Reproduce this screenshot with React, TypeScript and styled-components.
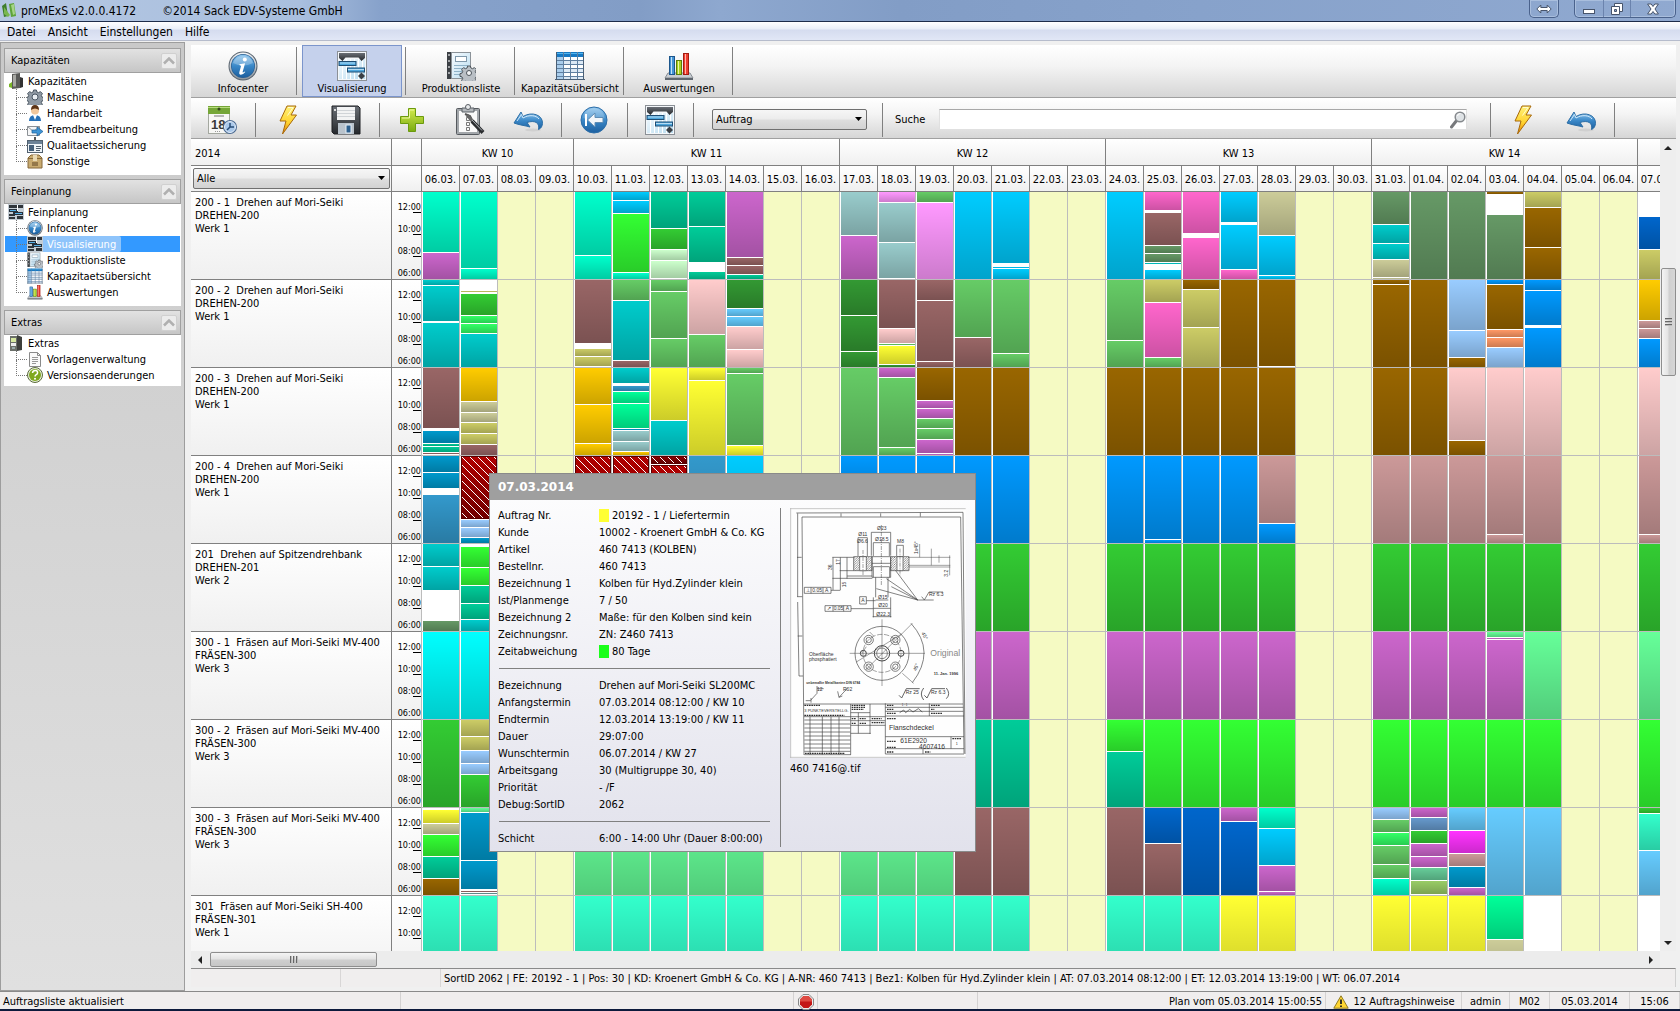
import React from 'react';
import styled, { createGlobalStyle, css } from 'styled-components';

const Global = createGlobalStyle`
  * { box-sizing: border-box; }
  body {
    margin: 0;
    overflow: hidden;
    background: #f0f0f0;
    color: #000;
    font-family: 'DejaVu Sans Condensed', 'DejaVu Sans', Tahoma, sans-serif;
    font-size: 11px;
    line-height: 16px;
  }
  button, select, input { font: inherit; color: inherit; }
  ul, dl, dd, p, h1, h2 { margin: 0; padding: 0; font-size: inherit; font-weight: inherit; }
  ul { list-style: none; }
`;

/* ---------- icons ---------- */

type IconProps = { size?: number };

const Svg = styled.svg`
  display: block;
  flex: none;
`;

const Defs = () => (
  <svg width="0" height="0" aria-hidden="true">
    <defs>
      <linearGradient id="gBlue" x1="0" y1="0" x2="0" y2="1">
        <stop offset="0" stopColor="#8fc6ee" />
        <stop offset="0.5" stopColor="#3a88c8" />
        <stop offset="1" stopColor="#1c5f9f" />
      </linearGradient>
      <linearGradient id="gSilver" x1="0" y1="0" x2="0" y2="1">
        <stop offset="0" stopColor="#f4f6f8" />
        <stop offset="1" stopColor="#8c949c" />
      </linearGradient>
      <linearGradient id="gBolt" x1="0" y1="0" x2="0" y2="1">
        <stop offset="0" stopColor="#fff27a" />
        <stop offset="0.6" stopColor="#ffd22e" />
        <stop offset="1" stopColor="#e07a00" />
      </linearGradient>
      <linearGradient id="gGreen" x1="0" y1="0" x2="0" y2="1">
        <stop offset="0" stopColor="#d3ea4e" />
        <stop offset="1" stopColor="#7aab10" />
      </linearGradient>
      <linearGradient id="gDark" x1="0" y1="0" x2="0" y2="1">
        <stop offset="0" stopColor="#6a6f76" />
        <stop offset="1" stopColor="#25282c" />
      </linearGradient>
      <linearGradient id="gPaper" x1="0" y1="0" x2="1" y2="1">
        <stop offset="0" stopColor="#f6fbff" />
        <stop offset="1" stopColor="#b9dcef" />
      </linearGradient>
    </defs>
  </svg>
);

const gearPath =
  'M-1.4-7h2.8l.5 2 1.7.7 1.8-1.1 2 2-1.1 1.8.7 1.7 2 .5v2.800l-2 .5-.7 1.700 1.100 1.800-2 2-1.800-1.100-1.700.7-.5 2h-2.800l-.5-2-1.700-.7-1.800 1.100-2-2 1.100-1.800-.7-1.700-2-.5v-2.800l2-.5.7-1.700-1.100-1.800 2-2 1.800 1.100 1.700-.7z';

const InfoIcon = ({ size = 30 }: IconProps) => (
  <Svg width={size} height={size} viewBox="0 0 30 30">
    <circle cx="15" cy="15" r="14.500" fill="#59646f" />
    <circle cx="15" cy="15" r="13.500" fill="url(#gSilver)" />
    <circle cx="15" cy="15" r="12" fill="#2a5f92" />
    <circle cx="15" cy="15" r="11.300" fill="url(#gBlue)" />
    <path d="M5 12a10.500 10 0 0 1 20 0q-10 5-20 0z" fill="#fff" opacity=".25" />
    <circle cx="16.800" cy="8.600" r="2" fill="#fff" />
    <path d="M11.500 13.200l5.600-.9-2.500 8.700q-.2 1.200 2.200-.6l.5.700q-2.500 3-4.800 2.700-1.800-.4-1.200-2.600l1.700-6q.1-1-1.700-1.200z" fill="#fff" />
  </Svg>
);

const GanttIcon = ({ size = 30 }: IconProps) => (
  <Svg width={size} height={size} viewBox="0 0 30 30">
    <rect x=".5" y=".5" width="29" height="29" fill="#f4f7fa" stroke="#8b9096" />
    <rect x="2" y="8" width="26" height="20" fill="url(#gPaper)" />
    <path d="M5.500 8v20M9.500 8v20M13.500 8v20M17.500 8v20M21.500 8v20M25.500 8v20" stroke="#fff" />
    <path d="M2 2h26v5l-3.500 3-3-3.500h-13l-3 3.500-3.500-3z" fill="url(#gDark)" />
    <rect x="2" y="10.500" width="17" height="4" fill="#4fa8de" stroke="#1f4d73" />
    <rect x="10.500" y="17" width="17" height="4" fill="#4fa8de" stroke="#1f4d73" />
    <path d="M3 12h15M11 18.500h16" stroke="#b5dcf4" />
    <path d="M24.500 21.500l3.500 3.500-3.500 3.500-3.500-3.500z" fill="#3a3f45" />
  </Svg>
);

const GanttSmallIcon = () => (
  <Svg width={16} height={16} viewBox="0 0 16 16">
    <rect width="16" height="16" fill="#c3ccd4" />
    <path d="M1 1h14v3h-14zM1 10h6v2h-6zM9 12h6v3h-6zM1 13h6v2h-6z" fill="#30353a" />
    <path d="M1 5h9v3h-9zM5 8h10v3h-10z" fill="#26313c" />
    <path d="M2 6.500h6M7 9.500h7" stroke="#58b0e6" />
    <path d="M9.500 1v6" stroke="#fff" />
  </Svg>
);

const ProductionIcon = ({ size = 30 }: IconProps) => (
  <Svg width={size} height={size} viewBox="0 0 30 30">
    <rect x="1" y="1" width="24" height="27" fill="#8b9298" />
    <rect x="1" y="1" width="4" height="27" fill="#3c4045" />
    <path d="M3 3v24" stroke="#c6c9cc" strokeDasharray="2 4" strokeWidth="1.500" />
    <rect x="6" y="2" width="18" height="25" fill="url(#gPaper)" />
    <rect x="9.500" y="5.500" width="11" height="5" fill="#fff" stroke="#7f98ab" />
    <path d="M8 14.500h14M8 17.500h11M8 20.500h8M8 23.500h7" stroke="#8fb2c8" />
    <g transform="translate(23 22)">
      <path d={gearPath} fill="#b9bfc5" stroke="#4d545b" />
      <circle r="2.500" fill="#f3f5f7" stroke="#4d545b" />
    </g>
  </Svg>
);

const TableIcon = ({ size = 30 }: IconProps) => (
  <Svg width={size} height={size} viewBox="0 0 30 30">
    <rect x="1" y="1" width="28" height="28" fill="#fff" />
    <rect x="1" y="5" width="7" height="24" fill="#a9cdec" />
    <path d="M8 9h21v4h-21zM8 17h21v4h-21zM8 25h21v3h-21z" fill="#dce9f5" />
    <rect x="1" y="1" width="28" height="5" fill="#1679c4" />
    <path d="M1 2.500h28" stroke="#53b5ee" />
    <path d="M1 9.500h28M1 13.500h28M1 17.500h28M1 21.500h28M1 25.500h28M8.500 1v28M15.500 1v28M22.500 1v28" stroke="#5f7fa0" />
    <path d="M1.500 1v28M28.500 1v28M0 28.500h30" stroke="#4a5f75" />
  </Svg>
);

const ChartIcon = ({ size = 30 }: IconProps) => (
  <Svg width={size} height={size} viewBox="0 0 30 30">
    <path d="M4 22h22l3 5h-28z" fill="#c9cdd2" stroke="#868c93" />
    <path d="M1 27h28v2h-28z" fill="#5f666e" />
    <rect x="5.500" y="5.500" width="5" height="18" fill="#4495d6" stroke="#1d568c" />
    <path d="M7.500 6v17" stroke="#c3e2f8" />
    <rect x="12.500" y="9.500" width="5" height="14" fill="#a9d01e" stroke="#5c7d0c" />
    <path d="M14.500 10v13" stroke="#e9f7a4" />
    <rect x="19.500" y="2.500" width="5" height="21" fill="#ef3e30" stroke="#a31b12" />
    <path d="M21.500 3v20" stroke="#ffb3a8" />
  </Svg>
);

const CalendarIcon = () => (
  <Svg width={30} height={30} viewBox="0 0 30 30">
    <rect x="1.500" y="1.500" width="21" height="27" fill="#f7f7f5" stroke="#a4a8a0" />
    <rect x="1" y="1" width="22" height="8" fill="#75a637" />
    <path d="M1 2.500h22" stroke="#b9dc80" />
    <circle cx="12" cy="4" r="1.500" fill="#34471c" />
    <path d="M7 11h10" stroke="#777" />
    <text x="4" y="24" fontSize="13" fontWeight="bold" fill="#3a3a3a" fontFamily="Liberation Sans, sans-serif">18</text>
    <path d="M8 26.500h6" stroke="#999" strokeDasharray="1 1" />
    <circle cx="23" cy="22" r="7" fill="#4b6b93" />
    <circle cx="23" cy="22" r="5.500" fill="#a9c8ea" stroke="#e4eefa" />
    <path d="M23 18v4h4M23 22l-3 3" stroke="#274c77" strokeWidth="1.500" fill="none" />
  </Svg>
);

const BoltIcon = () => (
  <Svg width={20} height={30} viewBox="0 0 20 30">
    <path d="M9 1h9l-5 9h5.500l-14 19 3.500-13h-6z" fill="url(#gBolt)" stroke="#a8690a" strokeLinejoin="round" />
    <path d="M10 2.500h5l-5.500 8" stroke="#fffbd0" fill="none" />
  </Svg>
);

const FloppyIcon = () => (
  <Svg width={30} height={30} viewBox="0 0 30 30">
    <path d="M1 1h26l2 2v26h-26l-2-2z" fill="url(#gDark)" stroke="#1d1f22" />
    <rect x="6" y="2" width="18" height="13" fill="#f2f3f4" />
    <path d="M6 5.500h18M6 8.500h18M6 11.500h18" stroke="#d0d4d8" />
    <rect x="7" y="18" width="16" height="11" fill="#b9c3cc" />
    <rect x="15" y="20" width="5" height="8" fill="#2c5f8d" stroke="#e8f0f6" />
    <rect x="3" y="4" width="2" height="2" fill="#ddd" />
  </Svg>
);

const PlusIcon = () => (
  <Svg width={26} height={26} viewBox="0 0 26 26">
    <path d="M9.500 1.500h7v8h8v7h-8v8h-7v-8h-8v-7h8z" fill="url(#gGreen)" stroke="#6b9a0e" />
    <path d="M11 3h4M3 11h7.500v-8" stroke="#edf8a6" fill="none" />
  </Svg>
);

const ClipboardIcon = () => (
  <Svg width={30} height={32} viewBox="0 0 30 32">
    <rect x="1.500" y="4.500" width="23" height="26" rx="1" fill="#a2a6aa" stroke="#55595e" />
    <rect x="4" y="7" width="18" height="21" fill="#fafafa" />
    <path d="M7 4h12v4h-12z" fill="#b4b8bc" stroke="#5b6066" />
    <circle cx="13" cy="3" r="2.500" fill="#e8eaec" stroke="#5a5f65" />
    <path d="M11.500 13.500h3v3h-3zM11.500 18.500h3v3h-3zM11.500 23.500h3v3h-3z" fill="none" stroke="#777" />
    <path d="M10 10l5 2 2 4" stroke="#555" strokeWidth="2" fill="none" />
    <path d="M12 11l6 7" stroke="#666" strokeWidth="3" />
    <path d="M17 17l11 11.500" stroke="#2b2d30" strokeWidth="4" />
    <path d="M17 16l10 10.500" stroke="#aeb3b8" />
  </Svg>
);

const UndoIcon = () => (
  <Svg width={30} height={24} viewBox="0 0 30 24">
    <ellipse cx="20" cy="22" rx="8" ry="1.500" fill="#d0d0d0" />
    <path d="M1 15l7-11 2 4.500c9-5.500 20-1.500 19.500 7-.3 3-1.500 5-4 6 1.500-7-4-9.500-11.500-7l3 4.500c-5-1.500-11-2-16-4z" fill="url(#gBlue)" stroke="#2c6ea6" strokeLinejoin="round" />
    <path d="M4 13l4.500-6.500 1.500 3.500c6-3.500 13-3 16 1" stroke="#cfe8fa" fill="none" />
  </Svg>
);

const BackIcon = () => (
  <Svg width={28} height={28} viewBox="0 0 28 28">
    <circle cx="14" cy="14" r="13" fill="url(#gBlue)" stroke="#2b6da8" />
    <path d="M3.500 12a10.500 10 0 0 1 21 0q-10.500 5-21 0z" fill="#fff" opacity=".2" />
    <path d="M6 8v12" stroke="#fff" strokeWidth="2" />
    <path d="M7.500 14l7.500-7v4.500h8v5h-8v4.500z" fill="#f2f6fa" stroke="#5e8db5" />
  </Svg>
);

const SearchIcon = () => (
  <Svg width={16} height={18} viewBox="0 0 16 18">
    <path d="M7 9l-5.500 7" stroke="#77797c" strokeWidth="3" strokeLinecap="round" />
    <circle cx="10" cy="6" r="4.800" fill="#dfe3e6" stroke="#85898d" strokeWidth="1.500" />
    <path d="M7.500 5a3 3 0 0 1 3-2.500" stroke="#fff" fill="none" />
  </Svg>
);

const TowerIcon = () => (
  <Svg width={16} height={16} viewBox="0 0 16 16">
    <path d="M4 1l8-1v15l-8 1z" fill="#5a5a58" />
    <path d="M5 2l3-.5v12h-3z" fill="#a9a9a4" />
    <path d="M12 4l3 1v9l-3 1z" fill="#333" />
    <path d="M1 11l3-2v6l-3-1z" fill="#7ab526" />
  </Svg>
);

const ExtrasIcon = () => (
  <Svg width={16} height={16} viewBox="0 0 16 16">
    <rect x="2" y="1" width="7" height="15" fill="#6b6f69" />
    <path d="M9 0l5 2v13l-5 1z" fill="#3d3f3c" />
    <rect x="3" y="3" width="5" height="4" fill="#d6e8a0" />
    <rect x="3" y="8" width="5" height="3" fill="#eee" />
    <rect x="4" y="12" width="3" height="2" fill="#9aa" />
  </Svg>
);

const GearIcon = () => (
  <Svg width={16} height={16} viewBox="-8 -8 16 16">
    <path d={gearPath} fill="#8f99a3" stroke="#4a5662" />
    <circle r="3" fill="#e9eef2" stroke="#4a5662" />
  </Svg>
);

const PersonIcon = () => (
  <Svg width={16} height={16} viewBox="0 0 16 16">
    <path d="M2 16q0-6 6-6t6 6z" fill="#2671b8" />
    <path d="M6 10l2 5 2-5z" fill="#fff" />
    <circle cx="8" cy="5.500" r="4" fill="#f0c79c" />
    <path d="M4 5q0-5 4-5t4 5q-4-3-8 0z" fill="#5d3415" />
  </Svg>
);

const MailIcon = () => (
  <Svg width={16} height={16} viewBox="0 0 16 16">
    <path d="M.5 5.500h12v9h-12z" fill="#f5f6f7" stroke="#8c9196" />
    <path d="M.5 5.500l6 5 6-5" fill="none" stroke="#8c9196" />
    <path d="M5 9h5v-3l6 4.500-6 4.500v-3h-5z" fill="#3f95d6" stroke="#1d5f99" strokeWidth=".7" />
  </Svg>
);

const BadgeIcon = () => (
  <Svg width={16} height={16} viewBox="0 0 16 16">
    <path d="M8 0v4" stroke="#555" strokeWidth="2" />
    <rect x=".5" y="3.500" width="15" height="12" fill="#eef3f7" stroke="#51606e" />
    <path d="M1 4h14v3h-14z" fill="#6c8297" />
    <rect x="2" y="8" width="5" height="6" fill="#46617c" />
    <path d="M9 9.500h5M9 11.500h5M9 13.500h4" stroke="#51606e" />
  </Svg>
);

const BoxIcon = () => (
  <Svg width={16} height={16} viewBox="0 0 16 16">
    <path d="M1 5l3-3h8l3 3v10h-14z" fill="#c9ab70" stroke="#86693a" />
    <path d="M1 5.500h14" stroke="#86693a" />
    <path d="M6 2h4v6h-4z" fill="#e8d9b4" />
    <rect x="5" y="9" width="6" height="4" fill="#94784a" />
  </Svg>
);

const PageIcon = () => (
  <Svg width={16} height={16} viewBox="0 0 16 16">
    <path d="M2.500 1.500h8l3 3v11h-11z" fill="#fafafa" stroke="#8a8a8a" />
    <path d="M10.500 1.500v3h3" fill="none" stroke="#8a8a8a" />
    <path d="M5 6.500h6M5 8.500h6M5 10.500h6M5 12.500h4" stroke="#999" />
  </Svg>
);

const HelpIcon = () => (
  <Svg width={16} height={16} viewBox="0 0 16 16">
    <circle cx="8" cy="8" r="7.500" fill="#e8eedd" stroke="#5a6b3a" />
    <circle cx="8" cy="8" r="6" fill="#7fa81e" />
    <path d="M5.500 6q.3-2.500 2.700-2.500t2.400 2.200q0 1.300-1.300 2t-1.200 1.800" stroke="#fff" strokeWidth="1.500" fill="none" />
    <circle cx="8" cy="11.800" r="1" fill="#fff" />
  </Svg>
);

const LogoIcon = () => (
  <Svg width={16} height={16} viewBox="0 0 16 16">
    <path d="M1 4l4-3 2 13-4 1z" fill="#3f7d2d" />
    <path d="M3 5l6 8-2 2-4-3z" fill="#78b750" />
    <path d="M8 2l5-1 2 13-5 1z" fill="#5ea43a" />
    <path d="M10 3l3-1 1 10-2 1z" fill="#a5d487" />
  </Svg>
);

const WarnIcon = () => (
  <Svg width={16} height={14} viewBox="0 0 16 14">
    <path d="M8 .8l7.200 12.400h-14.400z" fill="#ffd633" stroke="#8f7a20" strokeLinejoin="round" />
    <path d="M8 4.500v4.500M8 10.500v1.500" stroke="#222" strokeWidth="1.800" />
  </Svg>
);

const RecordIcon = () => (
  <Svg width={16} height={16} viewBox="0 0 16 16">
    <path d="M5 .5h6l4.500 4.500v6l-4.500 4.500h-6l-4.500-4.500v-6z" fill="#eee" stroke="#888" />
    <path d="M5.500 2h5l3.500 3.500v5l-3.500 3.500h-5l-3.500-3.500v-5z" fill="#c41616" />
    <path d="M5.500 2h5l3.500 3.500v2h-12v-2z" fill="#de4a42" />
  </Svg>
);

const Arrow = ({ dir }: { dir: 'up' | 'down' | 'left' | 'right' }) => {
  const d = { up: 'M0 5l4-4 4 4z', down: 'M0 2l4 4 4-4z', left: 'M6 0l-4 4 4 4z', right: 'M2 0l4 4-4 4z' }[dir];
  return (
    <Svg width={8} height={8} viewBox="0 0 8 8">
      <path d={d} fill="#222" />
    </Svg>
  );
};

/* ---------- window frame ---------- */

const Window = styled.div`
  display: flex;
  flex-direction: column;
  height: 100vh;
  border-bottom: 2px solid #0d1a3c;
`;

const TitleBar = styled.header`
  display: flex;
  align-items: flex-start;
  height: 22px;
  flex: none;
  padding-left: 1px;
  border-bottom: 1px solid #1d2c4a;
  background: linear-gradient(90deg, #b4c7e2 0, #a9bfde 300px, #87a2cb 380px, #829dc6 640px, #8ea8cf 720px, #829dc6 900px, #87a2cb 1200px, #90a9d0 100%);
  font-size: 12px;
`;

const TitleText = styled.h1`
  display: flex;
  flex: 1;
  gap: 26px;
  padding: 3px 0 0 4px;
  white-space: nowrap;
`;

const TitleIcon = styled.span`
  padding-top: 2px;
`;

const CaptionGroup = styled.div`
  display: flex;
  margin: 0 4px 0 11px;
  height: 18px;
  border: 1px solid #4a628c;
  border-top: 0;
  border-radius: 0 0 5px 5px;
  box-shadow: inset 0 0 0 1px #a9bedd;
  overflow: hidden;
`;

const CaptionButton = styled.button<{ $w: number }>`
  display: flex;
  align-items: center;
  justify-content: center;
  width: ${(p) => p.$w}px;
  padding: 0;
  border: 0;
  background: transparent;
  & + & { border-left: 1px solid #6b83ad; }
`;

const MenuBar = styled.nav`
  display: flex;
  flex: none;
  height: 19px;
  gap: 12px;
  padding-left: 7px;
  border-bottom: 1px solid #b6bccc;
  background: linear-gradient(#fff 0, #e9eef8 7px, #d5dcef 8px, #e1e7f6 100%);
`;

const MenuItem = styled.button`
  padding: 2px 0 0;
  border: 0;
  background: transparent;
  font-size: 12px;
  line-height: 16px;
`;

const Body = styled.div`
  display: flex;
  flex: 1;
  min-height: 0;
`;

/* ---------- sidebar ---------- */

const Sidebar = styled.aside`
  display: flex;
  flex-direction: column;
  gap: 4px;
  width: 185px;
  flex: none;
  margin-top: 1px;
  padding: 5px 3px;
  border: 1px solid #9d9d9d;
  background: linear-gradient(#c9c9c9, #e0e0e0);
`;

const PanelHead = styled.h2`
  display: flex;
  align-items: center;
  justify-content: space-between;
  height: 25px;
  padding: 1px 3px 0 6px;
  border: 1px solid #a0a0a0;
  background: linear-gradient(#e2e2e2, #c6c6c6);
`;

const Collapse = styled.button`
  display: flex;
  align-items: center;
  justify-content: center;
  width: 16px;
  height: 16px;
  padding: 0;
  border: 1px solid #d0d0d0;
  border-radius: 2px;
  background: #ececec;
`;

const Tree = styled.ul`
  padding: 0 1px 6px;
  background: #fff;
  section:last-child > & { padding-bottom: 3px; }
`;

const TreeRow = styled.li<{ $active?: boolean }>`
  display: flex;
  height: 16px;
  background: ${(p) => (p.$active ? '#3399ff' : 'transparent')};
  color: ${(p) => (p.$active ? '#fff' : '#000')};
`;

const TreeLink = styled.button<{ $active?: boolean }>`
  display: flex;
  gap: 4px;
  padding: 0 5px 0 0;
  border: 0;
  border-radius: 2px;
  background: ${(p) => (p.$active ? '#8ec4fb' : 'transparent')};
  line-height: 15px;
`;

const TreeText = styled.span`
  padding-top: 1px;
`;

const RootLink = styled(TreeLink)`
  margin-left: 3px;
`;

const Guide = styled.span<{ $last: boolean }>`
  width: 11px;
  margin-left: 11px;
  &::before {
    content: '';
    display: block;
    height: 8px;
    border-left: 1px dotted #777;
    border-bottom: 1px dotted #777;
  }
  &::after {
    content: '';
    display: block;
    height: 8px;
    border-left: ${(p) => (p.$last ? '0' : '1px dotted #777')};
  }
`;

type Leaf = { label: string; icon: React.ReactNode; active?: boolean };

const SidePanel = ({ title, icon, items }: { title: string; icon: React.ReactNode; items: Leaf[] }) => (
  <section>
    <PanelHead>
      {title}
      <Collapse aria-label={`${title} einklappen`}>
        <Svg width={12} height={8} viewBox="0 0 12 8">
          <path d="M1 6.500l5-5 5 5" fill="none" stroke="#b0b0b0" strokeWidth="2.500" />
        </Svg>
      </Collapse>
    </PanelHead>
    <Tree>
      <TreeRow>
        <RootLink>{icon}<TreeText>{title}</TreeText></RootLink>
      </TreeRow>
      {items.map((it, i) => (
        <TreeRow key={it.label} $active={it.active}>
          <Guide $last={i === items.length - 1} />
          <TreeLink $active={it.active}>{it.icon}<TreeText>{it.label}</TreeText></TreeLink>
        </TreeRow>
      ))}
    </Tree>
  </section>
);

/* ---------- toolbars ---------- */

const Main = styled.main`
  display: flex;
  flex-direction: column;
  flex: 1;
  min-width: 0;
  padding: 4px 4px 4px 6px;
`;

const TabBar = styled.div`
  display: flex;
  flex: none;
  height: 53px;
  padding-left: 2px;
  border-bottom: 1px solid #a0a0a0;
  background: linear-gradient(#fff, #f4f4f4 40%, #d6d6d6);
`;

const Tab = styled.button<{ $active?: boolean }>`
  display: flex;
  flex-direction: column;
  align-items: center;
  width: 100px;
  padding: 5px 0 0;
  border: 1px solid transparent;
  background: transparent;
  line-height: 16px;
  white-space: nowrap;
  ${(p) => p.$active && css`
    border-color: #7b95cc;
    background: #c5d1ec;
  `}
`;

const TabSep = styled.span`
  width: 1px;
  margin: 2px 5px 2px 3px;
  background: #808080;
`;

const ToolBar = styled.div`
  display: flex;
  align-items: center;
  flex: none;
  height: 41px;
  padding-top: 3px;
  border-bottom: 1px solid #a0a0a0;
  background: linear-gradient(#fff, #f4f4f4 40%, #d6d6d6);
`;

const ToolButton = styled.button`
  display: flex;
  align-items: center;
  justify-content: center;
  width: 58px;
  height: 36px;
  flex: none;
  padding: 0;
  border: 0;
  background: transparent;
`;

const ToolSep = styled.span`
  width: 1px;
  height: 34px;
  flex: none;
  margin: 0 3px 0 4px;
  background: #808080;
`;

const SelectBox = styled.span<{ $w: number }>`
  position: relative;
  display: block;
  width: ${(p) => p.$w}px;
  height: 21px;
  flex: none;
  svg {
    position: absolute;
    right: 5px;
    top: 8px;
    pointer-events: none;
  }
`;

const Select = styled.select`
  display: block;
  appearance: none;
  width: 100%;
  height: 100%;
  padding: 0 3px;
  border: 1px solid #707070;
  border-radius: 2px;
  background: linear-gradient(#f6f6f6, #ececec 48%, #dedede 52%, #d2d2d2);
`;

const Picker = ({ width, label, value }: { width: number; label: string; value: string }) => (
  <SelectBox $w={width}>
    <Select aria-label={label} defaultValue={value}>
      <option>{value}</option>
    </Select>
    <Svg width={7} height={4} viewBox="0 0 7 4">
      <path d="M0 0h7l-3.500 4z" fill="#000" />
    </Svg>
  </SelectBox>
);

const FilterSlot = styled.div`
  padding: 0 11px 0 15px;
`;

const SearchLabel = styled.label`
  padding: 0 14px 0 9px;
`;

const SearchField = styled.div`
  display: flex;
  align-items: center;
  flex: 1;
  height: 21px;
  margin-right: 19px;
  border: 1px solid #e0e0e0;
  border-top-color: #a8a8a8;
  background: #fff;
`;

const SearchInput = styled.input`
  flex: 1;
  min-width: 0;
  height: 18px;
  border: 0;
  outline: 0;
  background: transparent;
`;

const EndSpace = styled.span`
  width: 58px;
`;

/* ---------- planning chart ---------- */

const ChartFrame = styled.div`
  display: flex;
  flex: 1;
  min-height: 0;
`;

const Chart = styled.div`
  flex: 1;
  min-width: 0;
  overflow: hidden;
  background: #fff;
`;

const HeadRow = styled.div<{ $h: number }>`
  display: flex;
  height: ${(p) => p.$h}px;
  border-bottom: 1px solid #808080;
  background: linear-gradient(#fff, #f0f0f0);
`;

const HeadLabel = styled.div`
  display: flex;
  align-items: center;
  width: 201px;
  flex: none;
  padding: 3px 0 0 4px;
  border-right: 1px solid #808080;
`;

const HeadFilter = styled(HeadLabel)`
  padding: 0 0 0 2px;
`;

const HeadTime = styled.div`
  width: 29px;
  flex: none;
`;

const Week = styled.div<{ $days: number }>`
  display: flex;
  align-items: center;
  justify-content: center;
  width: ${(p) => p.$days * 38}px;
  flex: none;
  padding-top: 3px;
  border-left: 1px solid #808080;
`;

const DayHead = styled.div`
  width: 38px;
  flex: none;
  padding-top: 6px;
  border-left: 1px solid #808080;
  text-align: center;
  white-space: nowrap;
`;

const Row = styled.div`
  display: flex;
  height: 88px;
`;

const RowLabel = styled.div`
  width: 201px;
  flex: none;
  padding: 4px 0 0 4px;
  border-right: 1px solid #808080;
  border-bottom: 1px solid #808080;
  background: linear-gradient(#fff, #f0f0f0);
  line-height: 13px;
  white-space: pre;
`;

const Times = styled.div`
  width: 29px;
  flex: none;
  padding-top: 10px;
  border-bottom: 1px solid #808080;
  background: linear-gradient(#fff, #f0f0f0);
`;

const Time = styled.div`
  height: 22px;
  font-size: 9px;
  line-height: 10px;
  text-align: right;
`;

const Tick = styled.span`
  display: block;
  width: 8px;
  height: 1px;
  margin-left: auto;
  background: #000;
`;

const Cell = styled.div<{ $free?: boolean }>`
  display: flex;
  flex-direction: column;
  gap: 1px;
  width: 38px;
  flex: none;
  padding-left: ${(p) => (p.$free ? 0 : 1)}px;
  border-left: 1px solid #bcbcbc;
  border-bottom: 1px solid #bcbcbc;
  background: ${(p) => (p.$free ? '#f5fac3' : '#fff')};
  overflow: hidden;
`;

const Job = styled.div<{ $kind: string }>`
  flex: none;
  ${(p) => {
    if (p.$kind === 'fff') return css`background: #fff;`;
    if (p.$kind === 'hat' || p.$kind === 'hdk') {
      return css`
        border: 1px solid #5a0000;
        background:
          linear-gradient(45deg, transparent 47%, #fff 47%, #fff 53%, transparent 53%) 0 0 / 8px 8px,
          linear-gradient(${p.$kind === 'hat' ? '#b00000, #700000' : '#8a0000, #600000'});
      `;
    }
    return css`background: linear-gradient(transparent, rgba(0, 0, 0, 0.2)) #${p.$kind};`;
  }}
`;

const CELL_HEIGHT = 87;

/* A cell lists its jobs from top to bottom as colour:end, the last one reaching the cell's foot. */
const DayCell = ({ jobs }: { jobs: string }) => {
  let top = 0;
  return (
    <Cell>
      {jobs.split(' ').filter(Boolean).map((job, i) => {
        const [kind, end] = job.split(':');
        const bottom = end ? Number(end) : CELL_HEIGHT;
        const height = Math.max(bottom - top, 0);
        top = bottom + 1;
        return <Job key={i} $kind={kind} style={{ height }} />;
      })}
    </Cell>
  );
};

const WEEKS = [
  { name: 'KW 10', days: ['06.03.', '07.03.', '08.03.', '09.03.'], work: 2 },
  { name: 'KW 11', days: ['10.03.', '11.03.', '12.03.', '13.03.', '14.03.', '15.03.', '16.03.'], work: 5 },
  { name: 'KW 12', days: ['17.03.', '18.03.', '19.03.', '20.03.', '21.03.', '22.03.', '23.03.'], work: 5 },
  { name: 'KW 13', days: ['24.03.', '25.03.', '26.03.', '27.03.', '28.03.', '29.03.', '30.03.'], work: 5 },
  { name: 'KW 14', days: ['31.03.', '01.04.', '02.04.', '03.04.', '04.04.', '05.04.', '06.04.'], work: 5 },
  { name: '', days: ['07.04.'], work: 1 },
];

const same = (job: string, n = 5) => Array<string>(n).fill(job);

type Machine = { lines: string[]; times?: string[]; weeks: string[][] };

const MACHINES: Machine[] = [
  {
    lines: ['200 - 1  Drehen auf Mori-Seiki', 'DREHEN-200', 'Werk 1'],
    weeks: [
      ['0fc:60 c6c', '0fc:76 0fc'],
      ['0fc:63 0fc', '0cf:8 0cf:21 3f3:80 0fc', '0c9:36 3c3:57 cfc:68 cfc:86', '0c9:34 0c9:70 fff:79 0c9', 'c6c:65 966:73 966:82 0c9'],
      ['9cc:43 c6c', 'f9f:10 9cc:50 9cc:86', '6c6:10 f9f', '0cf', '0cf:71 fff:74 0cf:76 0cf'],
      ['0cf', 'f6c:18 fff:20 966:53 696:61 696:70 0cc:72 fff:77 0cf', 'f6c:41 fff:45 f6c', '0cf:30 fff:32 0cf:77 f6c', 'cc9:43 0cf:83 0cf'],
      ['696:32 0cc:51 0cc:67 cc9:85 cc9', '696', '696', '960:2 fff:22 696', 'cc6:15 960:55 960'],
      ['fff:24 06c:57 cc6'],
    ],
  },
  {
    lines: ['200 - 2  Drehen auf Mori-Seiki', 'DREHEN-200', 'Werk 1'],
    weeks: [
      ['0cc:5 0cc:41 fff:42 0cc', 'fff:10 cc6:12 fff:13 3c3:35 3f6:43 3f6:53 0cc'],
      ['966:63 fff:68 cc6:76 cc6:86', '6c6:20 0cc:80 966', '6c6:11 6c6:58 6c6', 'fcc:54 6c6', '393:28 6cf:36 6cf:46 fcc:69 fcc'],
      ['393:35 393:71 393', '966:48 fcc:63 6c6:65 ff3:84 393', '966:20 966:81 966', '6c6:57 966', '6c6:73 6c6'],
      ['6c6:60 6c6', 'cc6:22 f6c:77 6c6', '960:9 cc6:47 cc6', '960', '960:86'],
      ['960:4 960', '960', '9cf:50 9cf:77 960', '09f:4 960:49 f96:57 f96:67 9cf', '09f:10 09f:45 fff:47 09f'],
      ['fc0:40 c99:48 c99:58 09f'],
    ],
  },
  {
    lines: ['200 - 3  Drehen auf Mori-Seiki', 'DREHEN-200', 'Werk 1'],
    weeks: [
      ['966:60 fff:62 09c:75 0c9:78 0c9:84 966:86', 'fc0:33 cc9:44 cc9:54 cc6:65 cc6:76 966'],
      ['fc0:36 fc0:75 fc0', '0cc:15 fff:17 39c:23 0f9:35 0f9:60 09c:62 9cc:73 9cc:83 fc0', 'ff3:52 0cc', 'ff3:12 ff3', '6c6:5 6c6:77 ff3'],
      ['6c6', 'c6c:9 6c6:79 6c6', '960:32 c6c:40 c6c:50 6c6:60 6c6:71 c6c:85 c6c', '960', '960'],
      same('960'),
      ['960', '960', 'fcc:72 960', 'fcc', 'fcc'],
      ['fcc'],
    ],
  },
  {
    lines: ['200 - 4  Drehen auf Mori-Seiki', 'DREHEN-200', 'Werk 1'],
    weeks: [
      ['09c:16 09c:32 fff:38 39c', 'hat:63 9cf:71 9cf:81 09c'],
      ['hat', 'hat', 'hdk:8 hat', '39c', '0cf'],
      ['09f:40 09f', '09f', '09f', '09f', '09f'],
      ['09f', '09f:83 09f', '09f', '09f', 'c99:67 09f'],
      ['c99', 'c99', 'c99', 'c99:78 c99', 'c99'],
      ['c99:78 c99'],
    ],
  },
  {
    lines: ['201  Drehen auf Spitzendrehbank', 'DREHEN-201', 'Werk 2'],
    weeks: [
      ['0cc:22 0cc:46 fff:76 696', 'fff:2 3f3:23 3f3:41 0c9:59 0c9:75 0cc'],
      same('3c3'), same('3c3'), same('3c3'), same('3c3'), ['3c3'],
    ],
  },
  {
    lines: ['300 - 1  Fräsen auf Mori-Seiki MV-400', 'FRÄSEN-300', 'Werk 3'],
    weeks: [
      ['0ff', '0ff'],
      same('c6c'), same('c6c'), same('c6c'),
      ['c6c', 'c6c', 'c6c', '6f9:5 c6c:7 c6c', '6f9'],
      ['6f9'],
    ],
  },
  {
    lines: ['300 - 2  Fräsen auf Mori-Seiki MV-400', 'FRÄSEN-300', 'Werk 3'],
    weeks: [
      ['3c3', 'cc6:16 cc6:30 9cf:43 9cf:54 3c3'],
      same('0c9'), same('0c9'),
      ['3f3:31 0c9', '3f3', '3f3', '3f3', '3f3'],
      same('3f3'), ['3f3'],
    ],
  },
  {
    lines: ['300 - 3  Fräsen auf Mori-Seiki MV-400', 'FRÄSEN-300', 'Werk 3'],
    weeks: [
      ['fff:1 ff3:15 cc9:26 3f3:48 0c9:70 960', '6f9:4 09c:52 09c:81 fff:82 966:84 699:86'],
      same('6f9'),
      ['6f9', '6f9', '6f9', '966', '966'],
      ['966', '06c:35 966', '06c', 'c6c:13 06c', '0fc:20 0cf:57 c6c:83 c6c'],
      [
        '9cf:11 6c6:24 3f6:37 6c6:56 6c6:70 0fc',
        'c6c:9 69c:22 3c3:35 c6c:48 c6c:59 6c9:72 9c6:86',
        '6cf:22 f3f:45 c99:58 09c:79 c6c',
        '6cf',
        '6cf',
      ],
      ['3c3:5 3fc:42 6cf'],
    ],
  },
  {
    lines: ['301  Fräsen auf Mori-Seiki SH-400', 'FRÄSEN-301', 'Werk 1'],
    times: ['12:00', '10:00'],
    weeks: [
      ['3fc', '3fc'],
      same('3fc'), same('3fc'),
      ['3fc', '3fc', '3fc', 'ff3', 'ff3'],
      ['ff3', 'ff3', 'ff3', '0f9:43 cc9', ''],
      [''],
    ],
  },
];

const TIMES = ['12:00', '10:00', '08:00', '06:00'];

/* ---------- scroll bars ---------- */

const VScroll = styled.div`
  display: flex;
  flex-direction: column;
  align-items: center;
  width: 16px;
  flex: none;
  padding: 6px 0 4px;
  background: #eee;
`;

const VThumb = styled.div`
  display: flex;
  flex-direction: column;
  align-items: center;
  justify-content: center;
  gap: 1px;
  width: 15px;
  height: 108px;
  border: 1px solid #8e8e8e;
  border-radius: 2px;
  background: linear-gradient(90deg, #f4f4f4, #e2e2e2 48%, #cfcfcf 52%, #d6d6d6);
`;

const HScroll = styled.div`
  display: flex;
  align-items: center;
  height: 17px;
  flex: none;
  margin-right: 16px;
  padding: 0 5px;
  background: #ececec;
`;

const HThumb = styled.div`
  display: flex;
  align-items: center;
  justify-content: center;
  gap: 1px;
  width: 167px;
  height: 15px;
  border: 1px solid #8e8e8e;
  border-radius: 2px;
  background: linear-gradient(#f4f4f4, #e2e2e2 48%, #cfcfcf 52%, #c6c6c6);
`;

const Grip = styled.span<{ $vertical?: boolean }>`
  width: ${(p) => (p.$vertical ? 7 : 2)}px;
  height: ${(p) => (p.$vertical ? 2 : 7)}px;
  background: #666;
  border: solid #bbb;
  border-width: ${(p) => (p.$vertical ? '0 0 1px' : '0 1px 0 0')};
`;

const Spacer = styled.span<{ $size?: number }>`
  flex: ${(p) => (p.$size ? `0 0 ${p.$size}px` : '1')};
`;

/* ---------- status lines ---------- */

const InfoLine = styled.div`
  display: flex;
  height: 19px;
  flex: none;
  border-top: 1px solid #8a8a8a;
  border-right: 1px solid #d0d0d0;
  background: #f0eeee;
  white-space: nowrap;
`;

const InfoCell = styled.span<{ $w?: number }>`
  width: ${(p) => (p.$w ? `${p.$w}px` : 'auto')};
  padding: 2px 0 0 3px;
  border-right: ${(p) => (p.$w ? '1px solid #d8d6d6' : '0')};
`;

const StatusBar = styled.footer`
  display: flex;
  height: 18px;
  flex: none;
  border-top: 1px solid #8a8a8a;
  background: #f0eeee;
  white-space: nowrap;
`;

const StatusCell = styled.span<{ $w?: number; $align?: string }>`
  display: flex;
  align-items: center;
  justify-content: ${(p) => p.$align ?? 'center'};
  gap: 5px;
  flex: ${(p) => (p.$w ? `0 0 ${p.$w}px` : '1')};
  padding: 3px 3px 0;
  border-right: 1px solid #d4d2d2;
`;

/* ---------- order popup ---------- */

const Popup = styled.section`
  position: absolute;
  left: 489px;
  top: 473px;
  width: 487px;
  border: 1px solid #8a8a8a;
  background: linear-gradient(#fff, #fcfcfd 25px, #e2e2ec);
`;

const PopupHead = styled.h2`
  height: 26px;
  padding-left: 8px;
  background: #9f9f9f;
  color: #fff;
  font-family: 'DejaVu Sans', Verdana, sans-serif;
  font-size: 12px;
  font-weight: bold;
  line-height: 27px;
`;

const PopupBody = styled.div`
  display: flex;
  padding: 7px 8px 4px;
`;

const Facts = styled.dl`
  width: 274px;
  line-height: 17px;
  white-space: nowrap;
`;

const Fact = styled.div`
  display: flex;
  dt { width: 101px; }
  dd { display: flex; align-items: center; gap: 3px; }
`;

const Rule = styled.hr`
  height: 1px;
  margin: 8px 2px 8px 1px;
  border: 0;
  background: #808080;
`;

const Swatch = styled.i<{ $color: string }>`
  width: 10px;
  height: 13px;
  background: ${(p) => p.$color};
`;

const Preview = styled.figure`
  margin: 1px 0 0 8px;
  padding-left: 9px;
  border-left: 1px solid #808080;
  figcaption { padding-top: 3px; }
`;

const ORDER: [string, string, string?][] = [
  ['Auftrag Nr.', '20192 - 1 / Liefertermin', '#ffff33'],
  ['Kunde', '10002 - Kroenert GmbH & Co. KG'],
  ['Artikel', '460 7413 (KOLBEN)'],
  ['Bestellnr.', '460 7413'],
  ['Bezeichnung 1', 'Kolben für Hyd.Zylinder klein'],
  ['Ist/Planmenge', '7 / 50'],
  ['Bezeichnung 2', 'Maße: für den Kolben sind kein'],
  ['Zeichnungsnr.', 'ZN: Z460 7413'],
  ['Zeitabweichung', '80 Tage', '#1aff1a'],
];

const STEP: [string, string, string?][] = [
  ['Bezeichnung', 'Drehen auf Mori-Seiki SL200MC'],
  ['Anfangstermin', '07.03.2014 08:12:00 / KW 10'],
  ['Endtermin', '12.03.2014 13:19:00 / KW 11'],
  ['Dauer', '29:07:00'],
  ['Wunschtermin', '06.07.2014 / KW 27'],
  ['Arbeitsgang', '30 (Multigruppe 30, 40)'],
  ['Priorität', '- /F'],
  ['Debug:SortID', '2062'],
];

const FactRows = ({ rows }: { rows: [string, string, string?][] }) => (
  <>
    {rows.map(([name, value, color]) => (
      <Fact key={name}>
        <dt>{name}</dt>
        <dd>{color && <Swatch $color={color} />}{value}</dd>
      </Fact>
    ))}
  </>
);

const Drawing = () => (
  <Svg width={176} height={250} viewBox="62 114 526 750" fontFamily="Liberation Sans, sans-serif" fill="#333">
    <defs>
      <pattern id="section" width="7" height="7" patternUnits="userSpaceOnUse">
        <path d="M0 7l7-7" stroke="#333" strokeWidth="1.500" />
      </pattern>
    </defs>
    <rect x="62" y="114" width="526" height="750" fill="#fefefe" />
    <path d="M62 116h526M63 114v750M62 862h526" stroke="#aaa" strokeWidth="2" fill="none" />
    <g fill="none" stroke="#444" strokeWidth="2">
      <path d="M80 129l500-2 6 725M97 141h476l10 710M97 141l6 714M84 130v250M82 262h14M82 380h16M84 396l4 222h12M84 498h14M214 130v10M333 130v10M452 128v12" />
      <path d="M252 260h55v42h-55zM363 260h55v42h-55z" fill="url(#section)" />
      <path d="M270 260h20v42h-20zM382 260h18v42h-18z" fill="#fff" />
      <path d="M307 260h56v62h-56zM307 280h56M311 290h48M311 322v-32M360 322v-32M318 322v60M355 322v60" />
      <path d="M305 187v70M363 187v70M305 187h58M311 218h48M311 218v40M359 218v40M265 203h28M265 203v55M293 203v55M381 226h20M381 226v32M401 226v32" />
      <path d="M335 165v180M280 240v76M391 236v80" strokeDasharray="12 3 3 3" strokeWidth="1.500" />
      <path d="M188 262h64M210 302h42M188 325h120M190 262v98M212 262v98M232 262v64M232 318h76" />
      <path d="M104 352h80v18h-80zM124 352v18M160 352v18M184 361h28" />
      <path d="M166 407h78v17h-78zM190 407v17M222 407v17M244 416h67M270 380h20v22h-20zM290 392h28" />
      <path d="M318 390h38M311 415h52M309 440h56M311 382v60M363 382v60" />
      <path d="M418 262h124M418 286h124M450 222v40M485 236v50M508 256v22M540 256v60M418 291h124" strokeWidth="1.500" />
      <path d="M378 302l66 88M350 326l94 64M320 356l124 34M365 350l79 40h48M456 380l8 10 14-24h42" />
      <circle cx="337" cy="550" r="81" />
      <circle cx="337" cy="550" r="57" strokeDasharray="16 5" strokeWidth="1.500" />
      <circle cx="337" cy="550" r="23" strokeWidth="3" />
      <circle cx="337" cy="550" r="16" />
      <circle cx="297" cy="510" r="14" /><circle cx="297" cy="510" r="8" />
      <circle cx="377" cy="510" r="14" /><circle cx="377" cy="510" r="8" />
      <circle cx="297" cy="590" r="14" /><circle cx="297" cy="590" r="8" />
      <circle cx="377" cy="590" r="14" /><circle cx="377" cy="590" r="8" />
      <circle cx="281" cy="550" r="9" strokeWidth="3" />
      <circle cx="394" cy="550" r="9" strokeWidth="3" />
      <path d="M240 550h226M337 448v200M428 460l-50 50-90 90M398 610l34 30M300 486l12 12M396 492l-136 84M290 530l-12 18" strokeWidth="1.500" />
      <path d="M424 460q76 84 4 178" />
      <path d="M108 692h14l20-22v-22M124 684v14M142 656h20M204 664l4 18 26-28M208 682l10-4" />
      <path d="M388 676l8 8 14-28h40M464 676l8 8 14-28h40M462 654q-14 18 0 36M530 654q14 18 0 32" strokeWidth="2.500" />
      <path d="M102 702h478M103 740h140M104 854h140M243 702v152M301 702v90M347 700v152M104 750h138M104 762h138M104 774h138M104 786h138M104 798h138M104 810h138M104 822h138M104 834h138M104 844h138M121 740v114M158 740v114M184 740v114M208 740v114" />
      <path d="M243 740h104M243 752h104M243 766h104M243 728h58M266 728v62M243 790h60M347 712h234M347 724h234M347 738h236M347 800h236M347 836h236M347 852h236M479 700v38M544 800v36M460 836v16" />
    </g>
    <path d="M246 706h42M246 712h40M246 718h36M352 706h20M352 718h20M352 730h26M484 706h26M484 718h10M484 730h34M352 746h28M104 706h48M352 814h28M352 832h28M548 806h28M246 746h14M270 746h18M306 746h30M246 760h14M270 760h20M306 758h38M104 736h120M106 850h120M352 846h20M466 846h16" stroke="#333" strokeWidth="4" strokeDasharray="5 2" />
    <g fontSize="15">
      <text x="322" y="181">Ø23</text><text x="316" y="212">Ø18.5</text><text x="266" y="197">Ø11</text>
      <text x="262" y="218">Ø6.6</text><text x="382" y="220">M8</text><text x="128" y="366">0.05</text>
      <text x="166" y="366">A</text><text x="192" y="421">0.05</text><text x="228" y="421">A</text>
      <text x="275" y="397">A</text><text x="325" y="386">Ø15</text><text x="326" y="411">Ø20</text>
      <text x="320" y="438">Ø22.3</text><text x="478" y="379">Rz 6.3</text><text x="142" y="662">12</text>
      <text x="220" y="662">R02</text><text x="108" y="365">⊥</text><text x="172" y="420">↗</text>
      <text transform="translate(188 300) rotate(-90)">36</text>
      <text transform="translate(210 284) rotate(-90)">17</text>
      <text transform="translate(230 352) rotate(-90)">15</text>
      <text transform="translate(444 252) rotate(-90)">1x45°</text>
      <text transform="translate(534 320) rotate(-90)">3.2</text>
      <text transform="translate(440 604) rotate(-70)">45°</text>
      <text transform="translate(455 490) rotate(60)">45°</text>
      <text x="118" y="557">Oberfläche</text><text x="118" y="574">phosphatiert</text>
      <text x="408" y="672">Rz 25</text><text x="484" y="672">Rz 6.3</text>
      <text x="558" y="824" fontSize="11">1</text>
    </g>
    <text x="492" y="616" fontSize="12" fontWeight="bold">11. Jan. 1996</text>
    <text x="104" y="727" fontSize="12">3 PUNKTEVERSTELLG.</text>
    <text x="396" y="708" fontSize="9">1 : 1</text>
    <text x="110" y="641" fontSize="10" fontWeight="bold">unbemaßte Metallkanten DIN 6784</text>
    <text x="482" y="559" fontSize="26" fill="#888">Original</text>
    <text x="358" y="780" fontSize="21">Flanschdeckel</text>
    <text x="392" y="819" fontSize="20">61E2920</text>
    <text x="448" y="837" fontSize="20">4607416</text>
    <path d="M390 728l12-8 6 8 12-10 10 8 16-10 12 10" stroke="#333" strokeWidth="2" fill="none" />
  </Svg>
);

/* ---------- page ---------- */

const STATUS_TEXT =
  'SortID 2062 | FE: 20192 - 1 | Pos: 30 | KD: Kroenert GmbH & Co. KG | A-NR: 460 7413 | Bez1: Kolben für Hyd.Zylinder klein | AT: 07.03.2014 08:12:00 | ET: 12.03.2014 13:19:00 | WT: 06.07.2014';

export default function App() {
  return (
    <Window>
      <Global />
      <TitleBar>
        <TitleIcon><LogoIcon /></TitleIcon>
        <TitleText>
          <span>proMExS v2.0.0.4172</span>
          <span>©2014 Sack EDV-Systeme GmbH</span>
        </TitleText>
        <Defs />
        <CaptionGroup>
          <CaptionButton $w={28} aria-label="Breite anpassen">
            <Svg width={16} height={10} viewBox="0 0 16 10">
              <path d="M.8 5l4-4v2.500h6.400v-2.500l4 4-4 4v-2.500h-6.400v2.500z" fill="#fff" stroke="#47546b" />
            </Svg>
          </CaptionButton>
        </CaptionGroup>
        <CaptionGroup>
          <CaptionButton $w={28} aria-label="Minimieren">
            <Svg width={12} height={12} viewBox="0 0 12 12">
              <rect x=".5" y="6.500" width="11" height="4" fill="#fff" stroke="#47546b" />
            </Svg>
          </CaptionButton>
          <CaptionButton $w={27} aria-label="Wiederherstellen">
            <Svg width={12} height={12} viewBox="0 0 12 12">
              <path d="M3.500 .5h8v8h-8z" fill="#fff" stroke="#47546b" />
              <path d="M.5 3.500h8v8h-8z" fill="#fff" stroke="#47546b" />
              <path d="M3.500 6.500h2v2h-2z" fill="#8ea8cf" stroke="#47546b" />
            </Svg>
          </CaptionButton>
          <CaptionButton $w={45} aria-label="Schließen">
            <Svg width={12} height={12} viewBox="0 0 12 12">
              <path d="M.6 1h3.600l1.800 2.500 1.800-2.500h3.600l-3.400 5 3.400 5h-3.600l-1.800-2.500-1.800 2.500h-3.600l3.400-5z" fill="#fff" stroke="#47546b" />
            </Svg>
          </CaptionButton>
        </CaptionGroup>
      </TitleBar>
      <MenuBar>
        {['Datei', 'Ansicht', 'Einstellungen', 'Hilfe'].map((m) => <MenuItem key={m}>{m}</MenuItem>)}
      </MenuBar>

      <Body>
        <Sidebar>
          <SidePanel
            title="Kapazitäten"
            icon={<TowerIcon />}
            items={[
              { label: 'Maschine', icon: <GearIcon /> },
              { label: 'Handarbeit', icon: <PersonIcon /> },
              { label: 'Fremdbearbeitung', icon: <MailIcon /> },
              { label: 'Qualitaetssicherung', icon: <BadgeIcon /> },
              { label: 'Sonstige', icon: <BoxIcon /> },
            ]}
          />
          <SidePanel
            title="Feinplanung"
            icon={<GanttSmallIcon />}
            items={[
              { label: 'Infocenter', icon: <InfoIcon size={16} /> },
              { label: 'Visualisierung', icon: <GanttSmallIcon />, active: true },
              { label: 'Produktionsliste', icon: <ProductionIcon size={16} /> },
              { label: 'Kapazitaetsübersicht', icon: <TableIcon size={16} /> },
              { label: 'Auswertungen', icon: <ChartIcon size={16} /> },
            ]}
          />
          <SidePanel
            title="Extras"
            icon={<ExtrasIcon />}
            items={[
              { label: 'Vorlagenverwaltung', icon: <PageIcon /> },
              { label: 'Versionsaenderungen', icon: <HelpIcon /> },
            ]}
          />
        </Sidebar>

        <Main>
          <TabBar>
            <Tab><InfoIcon />Infocenter</Tab><TabSep />
            <Tab $active><GanttIcon />Visualisierung</Tab><TabSep />
            <Tab><ProductionIcon />Produktionsliste</Tab><TabSep />
            <Tab><TableIcon />Kapazitätsübersicht</Tab><TabSep />
            <Tab><ChartIcon />Auswertungen</Tab><TabSep />
          </TabBar>
          <ToolBar>
            <Spacer $size={2} />
            <ToolButton aria-label="Kalender"><CalendarIcon /></ToolButton>
            <ToolSep />
            <ToolButton aria-label="Planen"><BoltIcon /></ToolButton>
            <ToolButton aria-label="Speichern"><FloppyIcon /></ToolButton>
            <ToolSep />
            <ToolButton aria-label="Neu"><PlusIcon /></ToolButton>
            <ToolButton aria-label="Bearbeiten"><ClipboardIcon /></ToolButton>
            <ToolButton aria-label="Rückgängig"><UndoIcon /></ToolButton>
            <ToolSep />
            <ToolButton aria-label="Zurück"><BackIcon /></ToolButton>
            <ToolSep />
            <ToolButton aria-label="Visualisierung anzeigen"><GanttIcon /></ToolButton>
            <ToolSep />
            <FilterSlot><Picker width={155} label="Filter" value="Auftrag" /></FilterSlot>
            <ToolSep />
            <SearchLabel htmlFor="suche">Suche</SearchLabel>
            <SearchField>
              <SearchInput id="suche" type="text" />
              <SearchIcon />
            </SearchField>
            <ToolSep />
            <ToolButton aria-label="Suche planen"><BoltIcon /></ToolButton>
            <ToolButton aria-label="Suche zurücksetzen"><UndoIcon /></ToolButton>
            <ToolSep />
            <EndSpace />
          </ToolBar>

          <ChartFrame>
            <Chart>
              <HeadRow $h={27}>
                <HeadLabel>2014</HeadLabel>
                <HeadTime />
                {WEEKS.map((w) => <Week key={w.name} $days={w.days.length}>{w.name}</Week>)}
              </HeadRow>
              <HeadRow $h={26}>
                <HeadFilter><Picker width={197} label="Maschinengruppe" value="Alle" /></HeadFilter>
                <HeadTime />
                {WEEKS.flatMap((w) => w.days).map((d) => <DayHead key={d}>{d}</DayHead>)}
              </HeadRow>
              {MACHINES.map((m) => (
                <Row key={m.lines[0]}>
                  <RowLabel>{m.lines.join('\n')}</RowLabel>
                  <Times>
                    {(m.times ?? TIMES).map((t) => <Time key={t}>{t}{t !== '06:00' && <Tick />}</Time>)}
                  </Times>
                  {WEEKS.map((w, wi) =>
                    w.days.map((d, di) =>
                      di < w.work ? <DayCell key={d} jobs={m.weeks[wi][di]} /> : <Cell key={d} $free />,
                    ),
                  )}
                </Row>
              ))}
            </Chart>
            <VScroll>
              <Arrow dir="up" />
              <Spacer $size={115} />
              <VThumb><Grip $vertical /><Grip $vertical /><Grip $vertical /></VThumb>
              <Spacer />
              <Arrow dir="down" />
            </VScroll>
          </ChartFrame>
          <HScroll>
            <Arrow dir="left" />
            <Spacer $size={6} />
            <HThumb><Grip /><Grip /><Grip /></HThumb>
            <Spacer />
            <Arrow dir="right" />
          </HScroll>
          <InfoLine>
            <InfoCell $w={150} />
            <InfoCell $w={100} />
            <InfoCell>{STATUS_TEXT}</InfoCell>
          </InfoLine>
        </Main>
      </Body>

      <StatusBar>
        <StatusCell $w={401} $align="flex-start">Auftragsliste aktualisiert</StatusCell>
        <StatusCell $w={393} />
        <StatusCell $w={24}><RecordIcon /></StatusCell>
        <StatusCell $w={160} />
        <StatusCell $align="flex-end">Plan vom 05.03.2014 15:00:55</StatusCell>
        <StatusCell $w={136}><WarnIcon />12 Auftragshinweise</StatusCell>
        <StatusCell $w={48}>admin</StatusCell>
        <StatusCell $w={40}>M02</StatusCell>
        <StatusCell $w={80}>05.03.2014</StatusCell>
        <StatusCell $w={50}>15:06</StatusCell>
      </StatusBar>

      <Popup role="tooltip">
        <PopupHead>07.03.2014</PopupHead>
        <PopupBody>
          <Facts>
            <FactRows rows={ORDER} />
            <Rule />
            <FactRows rows={STEP} />
            <Rule />
            <FactRows rows={[['Schicht', '6:00 - 14:00 Uhr (Dauer 8:00:00)']]} />
          </Facts>
          <Preview>
            <Drawing />
            <figcaption>460 7416@.tif</figcaption>
          </Preview>
        </PopupBody>
      </Popup>
    </Window>
  );
}
